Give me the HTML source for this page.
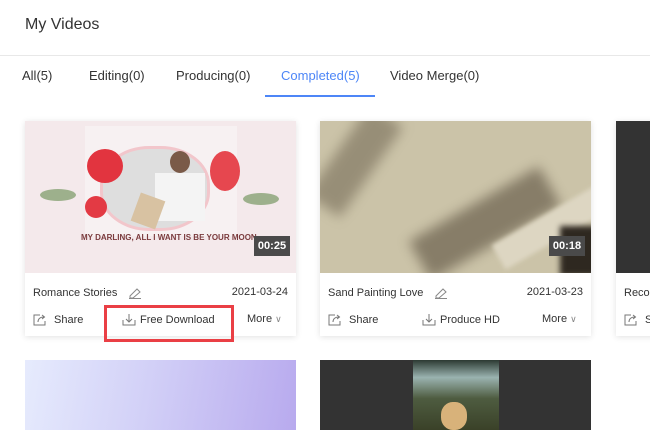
<!DOCTYPE html>
<html><head><meta charset="utf-8"><style>
*{margin:0;padding:0;box-sizing:border-box}
body{width:650px;height:430px;overflow:hidden;background:#fff;font-family:"Liberation Sans",Arial,sans-serif;color:#333;position:relative}
.abs{position:absolute}
.title{left:25px;top:16px;font-size:16px;color:#333}
.hr{left:0;top:55px;width:650px;height:1px;background:#e8e8e8}
.tab{top:68px;font-size:13px;color:#333}
.card{position:absolute;width:271px;height:215px;background:#fff;box-shadow:0 1px 6px rgba(0,0,0,.12)}
.thumb{position:absolute;left:0;top:0;width:271px;height:152px;overflow:hidden}
.badge{position:absolute;right:6px;bottom:17px;width:36px;height:20px;background:#4a4a4a;color:#fff;font-size:11px;font-weight:bold;text-align:center;line-height:20px}
.name{position:absolute;left:8px;top:166px;font-size:11px;color:#333}
.date{position:absolute;right:8px;top:165px;font-size:11px;color:#333}
.act{position:absolute;top:192px;font-size:11px;color:#333}
.ic{display:inline-block;vertical-align:-3px;margin-right:4px}
</style></head><body>
<div class="abs title">My Videos</div>
<div class="abs hr"></div>
<div class="abs tab" style="left:22px">All(5)</div>
<div class="abs tab" style="left:89px">Editing(0)</div>
<div class="abs tab" style="left:176px">Producing(0)</div>
<div class="abs tab" style="left:281px;color:#4d86f7">Completed(5)</div>
<div class="abs tab" style="left:390px">Video Merge(0)</div>
<div class="abs" style="left:265px;top:95px;width:110px;height:2px;background:#4d86f7"></div>

<!-- card 1 -->
<div class="card" style="left:25px;top:121px">
 <div class="thumb" style="background:#f4e9eb">
  <div class="abs" style="left:60px;top:5px;width:152px;height:110px;background:#f7f1f2"></div>
  <div class="abs" style="left:75px;top:25px;width:110px;height:85px;border-radius:45%;background:#dedede;border:3px solid #f2c6cb"></div>
  <div class="abs" style="left:62px;top:28px;width:36px;height:34px;border-radius:50%;background:#e2343f"></div>
  <div class="abs" style="left:185px;top:30px;width:30px;height:40px;border-radius:50%;background:#e6474f"></div>
  <div class="abs" style="left:60px;top:75px;width:22px;height:22px;border-radius:50%;background:#e33a44"></div>
  <div class="abs" style="left:130px;top:52px;width:50px;height:48px;background:#f4f4f4"></div>
  <div class="abs" style="left:110px;top:75px;width:26px;height:30px;background:#d8c2a2;transform:rotate(20deg)"></div>
  <div class="abs" style="left:145px;top:30px;width:20px;height:22px;border-radius:50%;background:#7a5a48"></div>
  <div class="abs" style="left:15px;top:68px;width:36px;height:12px;background:#9db08c;border-radius:50%"></div>
  <div class="abs" style="left:218px;top:72px;width:36px;height:12px;background:#9db08c;border-radius:50%"></div>
  <div class="abs" style="left:56px;top:112px;font-size:8px;font-weight:bold;color:#7a3b3d">MY DARLING, ALL I WANT IS BE YOUR MOON.</div>
  <div class="badge">00:25</div>
 </div>
 <div class="name">Romance Stories <svg class="ic" style="margin-left:8px" width="14" height="12" viewBox="0 0 14 12"><path d="M2 9 L9 2 L12 5 L5 11 L2 11Z M1 11.5H13" fill="none" stroke="#888" stroke-width="1"/></svg></div>
 <div class="date">2021-03-24</div>
 <div class="act" style="left:8px"><svg class="ic" width="14" height="13" viewBox="0 0 14 13"><path d="M7 2H1V12H12V8 M5 9C5 6 7 4 11 4 M9 2L11.5 4L9 6" fill="none" stroke="#777"/></svg> Share</div>
 <div class="act" style="left:97px"><svg class="ic" width="14" height="13" viewBox="0 0 14 13"><path d="M1 7V12H13V7 M7 1V9 M4 6L7 9L10 6" fill="none" stroke="#777"/></svg>Free Download</div>
 <div class="act" style="left:222px">More <span style="color:#888;font-size:9px">&#8744;</span></div>
</div>
<div class="abs" style="left:104px;top:305px;width:130px;height:37px;border:3px solid #ea3f45"></div>

<!-- card 2 -->
<div class="card" style="left:320px;top:121px">
 <div class="thumb" style="background:#cbc3a8">
  <div class="abs" style="left:-20px;top:20px;width:110px;height:40px;background:#6e6450;opacity:.55;transform:rotate(-55deg);filter:blur(6px)"></div>
  <div class="abs" style="left:90px;top:80px;width:150px;height:45px;background:#5a4f3e;opacity:.6;transform:rotate(-30deg);filter:blur(6px)"></div>
  <div class="abs" style="left:170px;top:90px;width:130px;height:28px;background:#ddd6c2;transform:rotate(-30deg);filter:blur(2px)"></div>
  <div class="abs" style="left:240px;top:105px;width:40px;height:50px;background:#2e2820;filter:blur(3px)"></div>
  <div class="badge">00:18</div>
 </div>
 <div class="name">Sand Painting Love <svg class="ic" style="margin-left:8px" width="14" height="12" viewBox="0 0 14 12"><path d="M2 9 L9 2 L12 5 L5 11 L2 11Z M1 11.5H13" fill="none" stroke="#888" stroke-width="1"/></svg></div>
 <div class="date">2021-03-23</div>
 <div class="act" style="left:8px"><svg class="ic" width="14" height="13" viewBox="0 0 14 13"><path d="M7 2H1V12H12V8 M5 9C5 6 7 4 11 4 M9 2L11.5 4L9 6" fill="none" stroke="#777"/></svg> Share</div>
 <div class="act" style="left:102px"><svg class="ic" width="14" height="13" viewBox="0 0 14 13"><path d="M1 7V12H13V7 M7 1V9 M4 6L7 9L10 6" fill="none" stroke="#777"/></svg>Produce HD</div>
 <div class="act" style="left:222px">More <span style="color:#888;font-size:9px">&#8744;</span></div>
</div>

<!-- card 3 -->
<div class="card" style="left:616px;top:121px">
 <div class="thumb" style="background:#333"></div>
 <div class="name">Recording</div>
 <div class="act" style="left:8px"><svg class="ic" width="14" height="13" viewBox="0 0 14 13"><path d="M7 2H1V12H12V8 M5 9C5 6 7 4 11 4 M9 2L11.5 4L9 6" fill="none" stroke="#777"/></svg> Share</div>
</div>

<!-- row 2 -->
<div class="abs" style="left:25px;top:360px;width:271px;height:70px;background:linear-gradient(100deg,#e6ebfd 0%,#d2d0f7 45%,#b8aaee 100%)"></div>
<div class="abs" style="left:320px;top:360px;width:271px;height:70px;background:#333">
 <div class="abs" style="left:93px;top:0;width:86px;height:70px;background:linear-gradient(180deg,#2c3a32 0%,#9ab3b0 25%,#4e5c40 55%,#3a4128 100%)">
  <div class="abs" style="left:28px;top:42px;width:26px;height:28px;border-radius:45%;background:#d8b27a"></div>
 </div>
</div>
</body></html>
